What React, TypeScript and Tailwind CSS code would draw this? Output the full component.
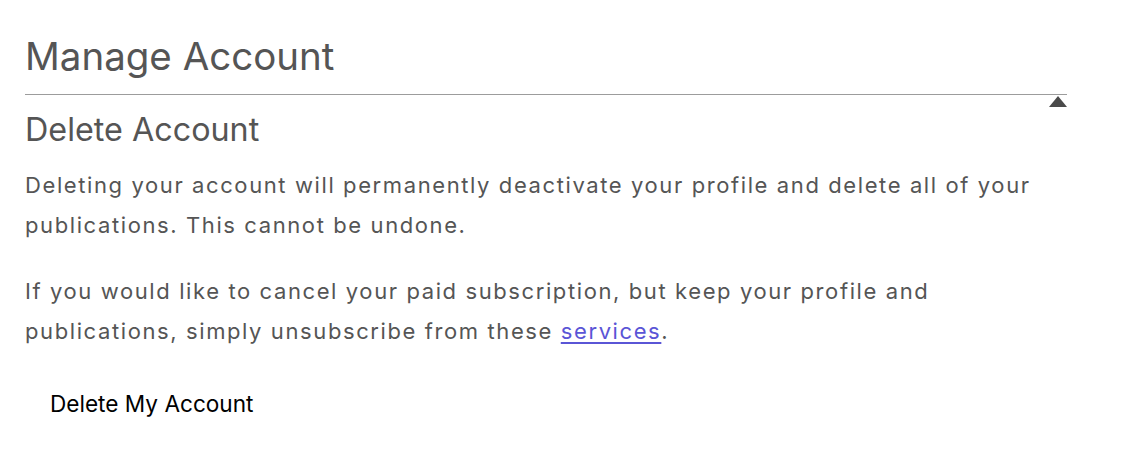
import React from "react";

export default function App() {
  return (
    <div className="min-h-screen bg-white" style={{ fontFamily: "Inter, 'Noto Sans', sans-serif" }}>
      <div className="w-[1042px] ml-[25px] pt-[32px] text-[#555555]">
        <h1 className="text-[38.5px] leading-[48px] font-normal">Manage Account</h1>
        <div className="mt-[14px] border-t border-[#9c9c9c]" />
        <div className="relative">
          <span className="absolute right-0 top-[1px] w-0 h-0 border-l-[9px] border-r-[9px] border-b-[11px] border-l-transparent border-r-transparent border-b-[#4a4a4a]" />
          <h2 className="pt-[15px] text-[32.3px] leading-[40px] font-normal">Delete Account</h2>
          <p className="mt-[15px] text-[22px] leading-[40px] tracking-[1.6px] whitespace-nowrap">
            Deleting your account will permanently deactivate your profile and delete all of your
            <br />
            publications. This cannot be undone.
          </p>
          <p className="mt-[26px] text-[22px] leading-[40px] tracking-[1.6px] whitespace-nowrap">
            If you would like to cancel your paid subscription, but keep your profile and
            <br />
            publications, simply unsubscribe from these{" "}
            <a href="#" className="text-[#5a55d6] underline underline-offset-[3px]">
              services
            </a>
            .
          </p>
          <button className="mt-[37px] ml-[25px] text-[22.6px] leading-[32px] text-black">Delete My Account</button>
        </div>
      </div>
    </div>
  );
}
